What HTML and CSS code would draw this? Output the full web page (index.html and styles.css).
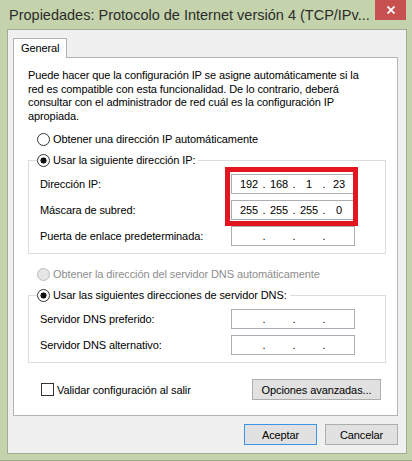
FILE: index.html
```html
<!DOCTYPE html>
<html lang="es">
<head>
    <meta charset="UTF-8">
    <meta name="viewport" content="width=device-width, initial-scale=1.0">
    <title>Propiedades: Protocolo de Internet versión 4 (TCP/IPv4)</title>
    <link rel="stylesheet" href="styles.css">
</head>
<body>

    <div class="window">
        <!-- Title bar -->
        <div class="titlebar">
            <span class="title">Propiedades: Protocolo de Internet versión 4 (TCP/IPv...</span>
            <button class="close" title="Cerrar">
                <svg width="8" height="8" viewBox="0 0 8 8"><path d="M0.5 0.5 L7.5 7.5 M7.5 0.5 L0.5 7.5" stroke="#fff" stroke-width="1.8"/></svg>
            </button>
        </div>

        <div class="client">
            <div class="tabs">
                <div class="tab">General</div>
            </div>

            <div class="pane">
                <p class="intro">
                    Puede hacer que la configuración IP se asigne automáticamente si la<br>
                    red es compatible con esta funcionalidad. De lo contrario, deberá<br>
                    consultar con el administrador de red cuál es la configuración IP<br>
                    apropiada.
                </p>

                <label class="radio-row"><input type="radio" name="ip"> Obtener una dirección IP automáticamente</label>

                <fieldset class="group">
                    <legend><label class="radio-row"><input type="radio" name="ip" checked> Usar la siguiente dirección IP:</label></legend>
                    <div class="fields">
                        <span>Dirección IP:</span>
                        <div class="ip"><span class="seg">192</span><span class="dot">.</span><span class="seg">168</span><span class="dot">.</span><span class="seg">1</span><span class="dot">.</span><span class="seg">23</span></div>

                        <span>Máscara de subred:</span>
                        <div class="ip"><span class="seg">255</span><span class="dot">.</span><span class="seg">255</span><span class="dot">.</span><span class="seg">255</span><span class="dot">.</span><span class="seg">0</span></div>

                        <span>Puerta de enlace predeterminada:</span>
                        <div class="ip"><span class="seg"></span><span class="dot">.</span><span class="seg"></span><span class="dot">.</span><span class="seg"></span><span class="dot">.</span><span class="seg"></span></div>
                    </div>
                </fieldset>

                <label class="radio-row dns-auto disabled"><input type="radio" name="dns" disabled> Obtener la dirección del servidor DNS automáticamente</label>

                <fieldset class="group">
                    <legend><label class="radio-row"><input type="radio" name="dns" checked> Usar las siguientes direcciones de servidor DNS:</label></legend>
                    <div class="fields">
                        <span>Servidor DNS preferido:</span>
                        <div class="ip"><span class="seg"></span><span class="dot">.</span><span class="seg"></span><span class="dot">.</span><span class="seg"></span><span class="dot">.</span><span class="seg"></span></div>

                        <span>Servidor DNS alternativo:</span>
                        <div class="ip"><span class="seg"></span><span class="dot">.</span><span class="seg"></span><span class="dot">.</span><span class="seg"></span><span class="dot">.</span><span class="seg"></span></div>
                    </div>
                </fieldset>

                <div class="options-row">
                    <label class="check"><input type="checkbox"> Validar configuración al salir</label>
                    <button class="btn advanced">Opciones avanzadas...</button>
                </div>
            </div>

            <div class="actions">
                <button class="btn default">Aceptar</button>
                <button class="btn">Cancelar</button>
            </div>
        </div>

        <!-- red annotation box -->
        <div class="highlight"></div>
    </div>

</body>
</html>
```

FILE: styles.css
```css
body {
    margin: 0;
    background-color: #c4d3ab;
    font-family: "Liberation Sans", Arial, sans-serif;
    font-size: 11px;
    letter-spacing: -0.1px;
    color: #000;
}
.window {
    position: relative;
    width: 412px;
    height: 461px;
    box-sizing: border-box;
    border-bottom: 1px solid #9fae88;
}
.titlebar {
    height: 29px;
    display: flex;
    justify-content: space-between;
    align-items: flex-start;
}
.title {
    min-width: 0;
    margin: 5px 0 0 9px;
    font-size: 14.5px;
    letter-spacing: 0;
    line-height: 20px;
    color: #2c2c2c;
    white-space: nowrap;
}
.close {
    flex-shrink: 0;
    width: 31px;
    height: 20px;
    margin-right: 6px;
    padding: 0;
    border: none;
    background: #c75050;
    display: flex;
    align-items: center;
    justify-content: center;
}
.client {
    width: 400px;
    height: 425px;
    margin-left: 7px;
    box-sizing: border-box;
    border: 1px solid #a3ab96;
    background: #f0f0f0;
    padding: 8px 8px 0 5px;
}
.tabs {
    display: flex;
}
.tab {
    position: relative;
    z-index: 1;
    height: 20px;
    box-sizing: border-box;
    padding: 0 7px;
    line-height: 18px;
    background: #fff;
    border: 1px solid #b4b4b4;
    border-bottom: none;
    margin-bottom: -1px;
}
.pane {
    height: 359px;
    box-sizing: border-box;
    background: #fff;
    border: 1px solid #b4b4b4;
    padding: 11px 11px 0 14px;
}
.intro {
    margin: 0;
    line-height: 13.5px;
}
.radio-row {
    display: flex;
    align-items: center;
    gap: 3px;
    height: 16px;
    padding-left: 9px;
    margin-top: 8px;
}
.radio-row input {
    appearance: none;
    width: 13px;
    height: 13px;
    margin: 0;
    box-sizing: border-box;
    border: 1px solid #333;
    border-radius: 50%;
    background: #fff;
}
.radio-row input:checked {
    background: radial-gradient(circle, #111 0 2.8px, #fff 3.3px);
}
.radio-row.disabled {
    color: #8d8d8d;
}
.radio-row input:disabled {
    border-color: #bcbcbc;
    background: #e6e6e6;
}
.dns-auto {
    margin-top: 12px;
}
.group {
    margin: 5px 0 0 0;
    border: 1px solid #dcdcdc;
    padding: 6px 30px 7px 11px;
}
.group legend {
    padding: 0 3px 0 0;
    margin-left: -3px;
}
.group legend .radio-row {
    padding-left: 0;
    margin-top: 0;
}
.fields {
    display: grid;
    grid-template-columns: 1fr 124px;
    row-gap: 6px;
    align-items: center;
}
.ip {
    height: 20px;
    box-sizing: border-box;
    border: 1px solid #abadb3;
    display: flex;
    align-items: center;
    padding-left: 5px;
    line-height: 16px;
    color: #000;
}
.seg {
    width: 24px;
    text-align: center;
}
.dot {
    width: 6px;
    text-align: center;
}
.options-row {
    display: flex;
    justify-content: space-between;
    align-items: center;
    margin-top: 16px;
    padding: 0 5px 0 13px;
}
.check {
    display: flex;
    align-items: center;
    gap: 3px;
}
.check input {
    appearance: none;
    width: 13px;
    height: 13px;
    margin: 0;
    border: 1px solid #333;
    background: #fff;
}
.btn {
    font-family: inherit;
    font-size: 11px;
    letter-spacing: -0.1px;
    color: #000;
    height: 21px;
    padding: 0;
    background: #e1e1e1;
    border: 1px solid #adadad;
}
.advanced {
    width: 129px;
}
.actions {
    display: flex;
    justify-content: flex-end;
    gap: 8px;
    margin-top: 8px;
}
.actions .btn {
    width: 73px;
}
.btn.default {
    border-color: #3d93e6;
}
.highlight {
    position: absolute;
    left: 225px;
    top: 167px;
    width: 133px;
    height: 59px;
    box-sizing: border-box;
    border: 5px solid #e3161f;
}
```
